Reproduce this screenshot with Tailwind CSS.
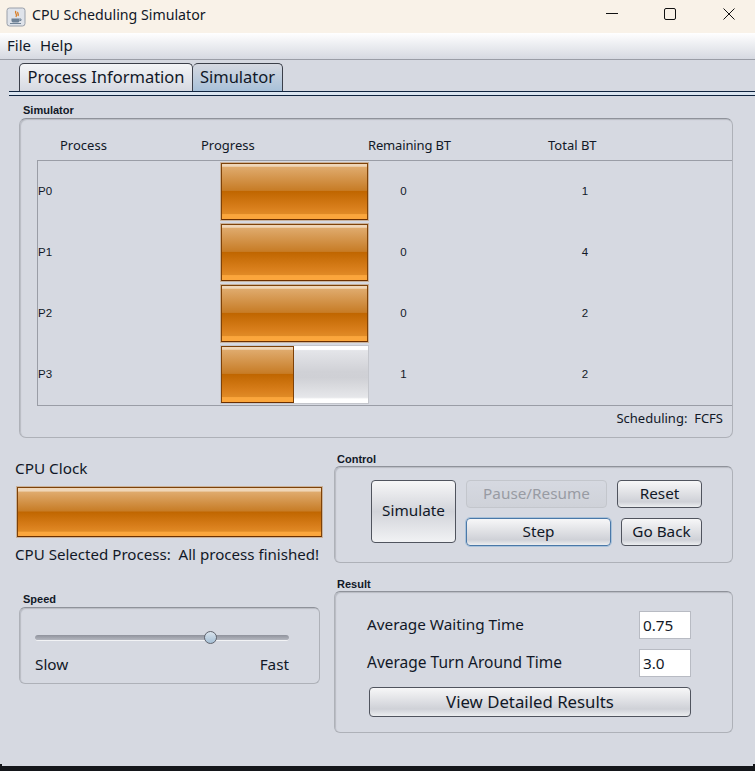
<!DOCTYPE html>
<html><head><meta charset="utf-8">
<script src="https://cdn.jsdelivr.net/npm/@tailwindcss/browser@4"></script>
</head>
<body class="m-0 overflow-hidden">
<div class="w-[755px] h-[771px] bg-[#d6d9e1] flex flex-col font-['Noto_Sans',sans-serif] text-[15.3px] text-[#111827] overflow-hidden relative">
  <!-- title bar -->
  <div class="h-[33px] bg-[#f9f2e8] flex items-center shrink-0 relative">
    <svg class="ml-[6px]" width="20" height="20" viewBox="0 0 20 20"><rect x="1" y="1" width="18" height="18" rx="2.5" fill="#dfe3ea" stroke="#9aa0aa"/><path d="M10 4c-2 2 2 3 0 6M12 5c-1 1 1 2 0 4" stroke="#d9791d" stroke-width="1.3" fill="none"/><path d="M5.5 11.5h8v2c0 1.5-1 2-2 2h-4c-1 0-2-.5-2-2z" fill="#6f8296"/><path d="M13.5 12h1.5v1.5h-1.5M4 16.500h11" stroke="#6f8296" fill="none"/></svg>
    <span class="ml-[6px] pb-[2px] text-[14.2px] leading-none">CPU Scheduling Simulator</span>
    <svg class="absolute left-[606px] top-[13px]" width="12" height="1"><rect width="12" height="1" fill="#111"/></svg>
    <svg class="absolute left-[664px] top-[8px]" width="12" height="12"><rect x=".5" y=".5" width="11" height="11" rx="1.500" fill="none" stroke="#111"/></svg>
    <svg class="absolute left-[723px] top-[8px]" width="12" height="12"><path d="M.5.5l11 11M11.500.5l-11 11" stroke="#111" fill="none"/></svg>
  </div>
  <!-- menu -->
  <div class="h-[27px] shrink-0 bg-gradient-to-b from-white to-[#d6d9e1] border-b border-[#9a9da6] flex items-center pl-[7px] pb-[2px] gap-[9px] text-[15px]">
    <span>File</span><span>Help</span>
  </div>
  <!-- tabs -->
  <div class="h-[31px] shrink-0 flex items-end pl-[19px] text-[16.5px] leading-none">
    <div class="w-[174px] h-[28px] bg-gradient-to-b from-[#f4f5f7] to-[#d6d9e1] border border-b-0 border-[#3b3f49] rounded-t-[5px] flex items-center justify-center">Process Information</div>
    <div class="w-[90px] h-[28px] bg-gradient-to-b from-[#d6d9e1] to-[#a8c1d9] border border-b-0 border-l-0 border-[#3b3f49] rounded-t-[5px] flex items-center justify-center">Simulator</div>
  </div>
  <div class="ml-[9px] h-[5px] shrink-0 border-y border-[#10243f] bg-[#dbe5f0]"></div>

  <!-- simulator -->
  <div class="mt-[7px] ml-[23px] h-[15px] shrink-0 text-[11px] leading-[15px] font-bold font-['Liberation_Sans',sans-serif]">Simulator</div>
  <section class="ml-[19px] w-[714px] h-[320px] shrink-0 border border-[#aeb1b8] border-t-[#8f929a] rounded-[7px] shadow-[inset_1px_1px_1px_#b8bbc3] flex flex-col pl-[17px] pt-[12px]">
    <div class="h-[29px] flex items-center pl-[23px] text-[13px] leading-none shrink-0">
      <span class="w-[141px]">Process</span><span class="w-[167px]">Progress</span><span class="w-[180px] tracking-[-0.15px]">Remaining BT</span><span>Total BT</span>
    </div>
    <div class="h-[246px] shrink-0 border-y border-l border-[#9a9da6] pt-[2px] flex flex-col gap-[4px] text-[11.500px] font-['Liberation_Sans',sans-serif]">
      <div class="h-[57px] flex items-center"><span class="w-[183px] pt-[1px]">P0</span>
        <div class="w-[147px] h-[57px] border border-[#7e4208] border-b-[#6b2f00] outline outline-1 outline-[#c9b29b] bg-[linear-gradient(#efd6b8_0,#efd6b8_4%,#dfaa6c_6%,#c77c26_48%,#c06600_50%,#d97f1c_80%,#e08a25_90%,#fba63c_92%,#fba63c_100%)]"></div>
        <span class="w-[71px] pt-[1px] text-center">0</span><span class="w-[292px] pt-[1px] text-center">1</span></div>
      <div class="h-[57px] flex items-center"><span class="w-[183px] pt-[1px]">P1</span>
        <div class="w-[147px] h-[57px] border border-[#7e4208] border-b-[#6b2f00] outline outline-1 outline-[#c9b29b] bg-[linear-gradient(#efd6b8_0,#efd6b8_4%,#dfaa6c_6%,#c77c26_48%,#c06600_50%,#d97f1c_80%,#e08a25_90%,#fba63c_92%,#fba63c_100%)]"></div>
        <span class="w-[71px] pt-[1px] text-center">0</span><span class="w-[292px] pt-[1px] text-center">4</span></div>
      <div class="h-[57px] flex items-center"><span class="w-[183px] pt-[1px]">P2</span>
        <div class="w-[147px] h-[57px] border border-[#7e4208] border-b-[#6b2f00] outline outline-1 outline-[#c9b29b] bg-[linear-gradient(#efd6b8_0,#efd6b8_4%,#dfaa6c_6%,#c77c26_48%,#c06600_50%,#d97f1c_80%,#e08a25_90%,#fba63c_92%,#fba63c_100%)]"></div>
        <span class="w-[71px] pt-[1px] text-center">0</span><span class="w-[292px] pt-[1px] text-center">2</span></div>
      <div class="h-[57px] flex items-center"><span class="w-[183px] pt-[1px]">P3</span>
        <div class="w-[147px] h-[57px] flex outline outline-1 outline-[#c4c6cc] bg-[linear-gradient(#fff_0,#fff_6%,#e4e5e9_8%,#d0d1d6_45%,#cfd0d5_55%,#e6e7ea_90%,#fff_93%,#fff_100%)]">
          <div class="w-[73px] h-full border border-[#7e4208] border-b-[#6b2f00] bg-[linear-gradient(#efd6b8_0,#efd6b8_4%,#dfaa6c_6%,#c77c26_48%,#c06600_50%,#d97f1c_80%,#e08a25_90%,#fba63c_92%,#fba63c_100%)]"></div>
        </div>
        <span class="w-[71px] pt-[1px] text-center">1</span><span class="w-[292px] pt-[1px] text-center">2</span></div>
    </div>
    <div class="mt-[4px] pr-[9px] text-right text-[13px] leading-[17px]">Scheduling:&nbsp; FCFS</div>
  </section>

  <!-- lower -->
  <div class="flex shrink-0">
    <div class="w-[334px] shrink-0 flex flex-col">
      <div class="mt-[20px] ml-[15px] h-[20px] leading-[20px]">CPU Clock</div>
      <div class="mt-[9px] ml-[17px] w-[305px] h-[50px] border border-[#7e4208] border-b-[#6b2f00] outline outline-1 outline-[#c9b29b] bg-[linear-gradient(#efd6b8_0,#efd6b8_6%,#dfaa6c_9%,#c77c26_48%,#c06600_50%,#d97f1c_80%,#e08a25_90%,#fba63c_92%,#fba63c_100%)]"></div>
      <div class="mt-[7px] ml-[15px] h-[20px] leading-[20px] text-[15.1px] whitespace-nowrap">CPU Selected Process:&nbsp; All process finished!</div>
      <div class="mt-[28px] ml-[23px] h-[15px] text-[11px] leading-[15px] font-bold font-['Liberation_Sans',sans-serif]">Speed</div>
      <section class="ml-[19px] w-[301px] h-[77px] border border-[#aeb1b8] border-t-[#8f929a] rounded-[6px] shadow-[inset_1px_1px_1px_#b8bbc3] px-[15px] flex flex-col">
        <div class="relative mt-[27px] h-[6px] w-[254px] shrink-0 rounded-[3px] bg-[linear-gradient(#8f929c,#b4b7bf)] border-b border-[#f2f3f5]">
          <div class="absolute left-[169px] top-[-4px] w-[13px] h-[13px] rounded-full border border-[#60646e] bg-[linear-gradient(#d9e3ec,#a6c0d6)]"></div>
        </div>
        <div class="mt-[13px] w-[254px] flex justify-between leading-[20px]"><span>Slow</span><span>Fast</span></div>
      </section>
    </div>
    <div class="w-[399px] shrink-0 flex flex-col">
      <div class="mt-[14px] ml-[3px] h-[15px] text-[11px] leading-[15px] font-bold font-['Liberation_Sans',sans-serif]">Control</div>
      <section class="mt-[-1px] h-[97px] border border-[#aeb1b8] border-t-[#8f929a] rounded-[6px] shadow-[inset_1px_1px_1px_#b8bbc3] pl-[36px] pt-[13px] flex gap-[10px]">
        <button class="w-[85px] h-[63px] pb-[2px] rounded-[4px] border border-[#50545e] bg-[linear-gradient(#f7f7f8,#d2d4da_50%,#f1f2f4)]">Simulate</button>
        <div class="flex flex-col gap-[10px]">
          <div class="flex gap-[10px]">
            <button class="w-[141px] h-[28px] pb-[2px] rounded-[4px] border border-[#c3c6cc] bg-[linear-gradient(#d6d9e1,#cfd2d9)] text-[#989ba3]">Pause/Resume</button>
            <button class="w-[85px] h-[28px] pb-[2px] rounded-[4px] border border-[#50545e] bg-[linear-gradient(#f7f7f8,#cfd1d7_80%,#eceef0)]">Reset</button>
          </div>
          <div class="flex gap-[10px]">
            <button class="w-[145px] h-[28px] pb-[2px] rounded-[4px] border border-[#4a78a8] outline outline-1 outline-[#a9c2da] bg-[linear-gradient(#f7f7f8,#cfd1d7_80%,#eceef0)]">Step</button>
            <button class="w-[81px] h-[28px] pb-[2px] rounded-[4px] border border-[#50545e] bg-[linear-gradient(#f7f7f8,#cfd1d7_80%,#eceef0)]">Go Back</button>
          </div>
        </div>
      </section>
      <div class="mt-[14px] ml-[3px] h-[15px] text-[11px] leading-[15px] font-bold font-['Liberation_Sans',sans-serif]">Result</div>
      <section class="mt-[-1px] h-[142px] border border-[#aeb1b8] border-t-[#8f929a] rounded-[6px] shadow-[inset_1px_1px_1px_#b8bbc3] pl-[32px] pr-[41px] pt-[19px] flex flex-col">
        <div class="flex items-center justify-between h-[28px]"><span class="pb-[2px]">Average Waiting Time</span><span class="w-[52px] h-[28px] bg-white border border-[#b8bbc3] pl-[3px] leading-[26px]">0.75</span></div>
        <div class="mt-[10px] flex items-center justify-between h-[28px]"><span class="pb-[1px] text-[15.5px]">Average Turn Around Time</span><span class="w-[52px] h-[28px] bg-white border border-[#b8bbc3] pl-[3px] leading-[26px]">3.0</span></div>
        <button class="mt-[10px] ml-[2px] w-[322px] h-[30px] rounded-[4px] border border-[#50545e] bg-[linear-gradient(#f7f7f8,#cfd1d7_75%,#eceef0)] text-[16.800px] leading-none">View Detailed Results</button>
      </section>
    </div>
  </div>
  <div class="absolute left-0 bottom-0 w-full h-[5px] bg-[#14161a]"></div>
  <div class="absolute left-0 bottom-[5px] w-[2px] h-[2px] bg-[#14161a]"></div>
  <div class="absolute right-0 bottom-[5px] w-[2px] h-[2px] bg-[#14161a]"></div>
</div>
</body></html>
